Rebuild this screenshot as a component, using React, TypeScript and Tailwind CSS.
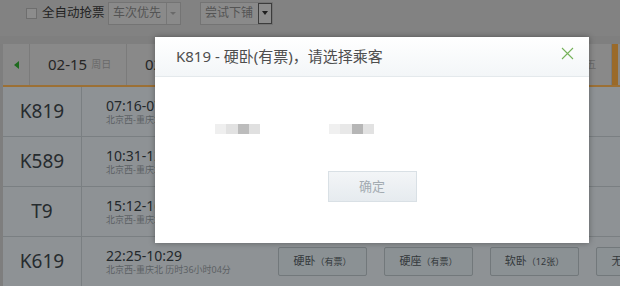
import React from "react";

const font = { fontFamily: '"Noto Sans", "Noto Sans CJK SC", sans-serif' };

function Select({ label, dark }: { label: string; dark?: boolean }) {
  return (
    <div className="flex h-[23px] w-[73px] items-stretch border border-[#747474] bg-[#8a8a8a]">
      <div className="flex flex-1 items-center justify-center text-[12px] text-[#545454]">{label}</div>
      <div
        className={
          dark
            ? "flex w-[14px] items-center justify-center border border-[#3c3c3c] bg-[#8c8c8c]"
            : "flex w-[14px] items-center justify-center border-l border-[#777]"
        }
      >
        <div
          className={
            dark
              ? "h-0 w-0 border-x-[3px] border-t-[4px] border-x-transparent border-t-[#1e1e1e]"
              : "h-0 w-0 border-x-[3px] border-t-[3px] border-x-transparent border-t-[#6a6a6a]"
          }
        />
      </div>
    </div>
  );
}

function DateCell({ d, w, highlight }: { d: string; w: string; highlight?: boolean }) {
  return (
    <div
      className={
        highlight
          ? "flex w-[97px] shrink-0 items-center border-l-[6px] border-[#9a6a2a] pl-[15px]"
          : "flex w-[97px] shrink-0 items-center border-r border-[#7b7b7b] pl-[18px]"
      }
    >
      <span className="text-[15px] text-[#262626]">{d}</span>
      <span className="ml-[4px] text-[10px] text-[#6a6a6a]">{w}</span>
    </div>
  );
}

function Row({ no, time, route, children }: { no: string; time: string; route: string; children?: React.ReactNode }) {
  return (
    <div className="flex h-[50px] border-b border-[#7a7f82] bg-[#8e9295]">
      <div className="flex w-[79px] shrink-0 items-center justify-center border-r border-[#7a7f82] text-[19px] text-[#262b2e]">
        {no}
      </div>
      <div className="flex w-[172px] shrink-0 flex-col justify-center pl-[24px]">
        <div className="text-[14px] leading-[17px] text-[#23282b]">{time}</div>
        <div className="whitespace-nowrap text-[9px] leading-[12px] text-[#5c6164]">{route}</div>
      </div>
      {children}
    </div>
  );
}

function SeatBtn({ a, b }: { a: string; b: string }) {
  return (
    <div className="flex h-[29px] w-[89px] shrink-0 items-center justify-center whitespace-nowrap rounded-[2px] border border-[#72787b] bg-[#8b9194] text-[#33383b]">
      <span className="text-[11px]">{a}</span>
      <span className="text-[9px]">（{b}）</span>
    </div>
  );
}

export default function App() {
  return (
    <div className="relative h-[286px] w-[620px] overflow-hidden bg-[#7e7e7e]" style={font}>
      {/* toolbar */}
      <div className="h-[36px] bg-[#828282]">
        <div className="flex h-[26px] items-center pl-[26px]">
          <div className="h-[11px] w-[11px] border border-[#6e6e6e] bg-[#8c8c8c]" />
          <span className="ml-[5px] text-[12.5px] text-[#222]">全自动抢票</span>
          <div className="ml-[3px]">
            <Select label="车次优先" />
          </div>
          <div className="ml-[19px]">
            <Select label="尝试下铺" dark />
          </div>
        </div>
      </div>
      <div className="h-[8px] bg-[#7f7f7f]" />

      {/* date strip */}
      <div className="ml-[3px] flex h-[43px] border-b-2 border-[#9c7035] bg-[#898989]">
        <div className="flex w-[27px] shrink-0 items-center justify-center border-r border-[#7b7b7b]">
          <div className="h-0 w-0 border-y-[4px] border-r-[5px] border-y-transparent border-r-[#1f6b1f]" />
        </div>
        <DateCell d="02-15" w="周日" />
        <DateCell d="02-16" w="周一" />
        <DateCell d="02-17" w="周二" />
        <DateCell d="02-18" w="周三" />
        <DateCell d="02-19" w="周四" />
        <DateCell d="02-20" w="周五" />
        <DateCell d="02-21" w="周六" highlight />
      </div>

      {/* rows */}
      <div className="ml-[3px] bg-[#8e9295]">
        <Row no="K819" time="07:16-07:53" route="北京西-重庆北 历时24小时37分" />
        <Row no="K589" time="10:31-12:44" route="北京西-重庆北 历时26小时13分" />
        <Row no="T9" time="15:12-16:20" route="北京西-重庆北 历时25小时08分" />
        <Row no="K619" time="22:25-10:29" route="北京西-重庆北 历时36小时04分">
          <div className="flex items-center gap-[17px] pl-[24px]">
            <SeatBtn a="硬卧" b="有票" />
            <SeatBtn a="硬座" b="有票" />
            <SeatBtn a="软卧" b="12张" />
            <SeatBtn a="无座" b="有票" />
          </div>
        </Row>
      </div>

      {/* modal */}
      <div className="absolute left-[155px] top-[37px] flex h-[206px] w-[434px] flex-col bg-white shadow-[0_0_6px_rgba(0,0,0,0.35)]">
        <div className="flex h-[40px] shrink-0 items-center justify-between border-b border-[#e4e9ec] bg-gradient-to-b from-[#ffffff] to-[#f3f6f8] pl-[21px] pr-[15px]">
          <span className="text-[15px] text-[#4e4e4e]">K819 - 硬卧(有票)，请选择乘客</span>
          <svg width="13" height="13" viewBox="0 0 13 13" className="-mt-[6px]">
            <path d="M1 1 L12 12 M12 1 L1 12" stroke="#76b25a" strokeWidth="1.1" fill="none" />
          </svg>
        </div>
        <div className="flex flex-1 flex-col items-center">
          <div className="mt-[47px] flex w-full pl-[60px]">
            <div className="flex h-[10px]">
              <div className="w-[11px] bg-[#efefef]" />
              <div className="w-[12px] bg-[#e2e2e2]" />
              <div className="w-[11px] bg-[#bcbcbc]" />
              <div className="w-[11px] bg-[#e0e0e0]" />
            </div>
            <div className="ml-[69px] flex h-[10px]">
              <div className="w-[11px] bg-[#f0f0f0]" />
              <div className="w-[12px] bg-[#e8e8e8]" />
              <div className="w-[11px] bg-[#b6b6b6]" />
              <div className="w-[11px] bg-[#e2e2e2]" />
            </div>
          </div>
          <div className="mt-[37px] flex h-[31px] w-[89px] items-center justify-center border border-[#d9e0e5] bg-gradient-to-b from-[#f3f5f7] to-[#e6ebef] text-[13px] text-[#a3abb1]">
            确定
          </div>
        </div>
      </div>
    </div>
  );
}
